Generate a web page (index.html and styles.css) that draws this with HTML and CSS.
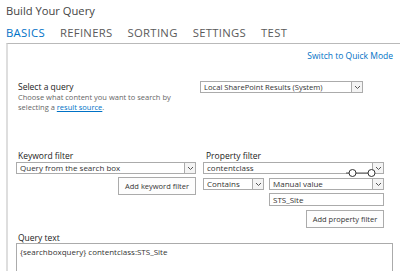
FILE: index.html
```html
<!DOCTYPE html>
<html>
<head>
<meta charset="utf-8">
<link rel="stylesheet" href="styles.css">
</head>
<body>
<div class="title">Build Your Query</div>
<div class="tabs">
  <span class="tab active">BASICS</span>
  <span class="tab">REFINERS</span>
  <span class="tab">SORTING</span>
  <span class="tab">SETTINGS</span>
  <span class="tab">TEST</span>
</div>
<div class="panel">
  <div class="switch"><a>Switch to Quick Mode</a></div>
  <div class="row-query">
    <div class="qlabel">
      <div class="label">Select a query</div>
      <div class="desc">Choose what content you want to search by</div>
      <div class="desc">selecting a <span class="link">result source</span>.</div>
    </div>
    <div class="select wide">
      <span class="val">Local SharePoint Results (System)</span>
      <span class="arrow"><svg width="7" height="5" viewBox="0 0 7 5"><path d="M1 1 L3.5 3.5 L6 1" fill="none" stroke="#555" stroke-width="1"/></svg></span>
    </div>
  </div>
  <div class="filters">
    <div class="col kw">
      <div class="label">Keyword filter</div>
      <div class="select full">
        <span class="val">Query from the search box</span>
        <span class="arrow"><svg width="7" height="5" viewBox="0 0 7 5"><path d="M1 1 L3.5 3.5 L6 1" fill="none" stroke="#555" stroke-width="1"/></svg></span>
      </div>
      <div class="btnrow kwrow"><div class="btn">Add keyword filter</div></div>
    </div>
    <div class="col pf">
      <div class="label">Property filter</div>
      <div class="select full">
        <span class="val">contentclass</span>
        <span class="arrow"><svg width="7" height="5" viewBox="0 0 7 5"><path d="M1 1 L3.5 3.5 L6 1" fill="none" stroke="#555" stroke-width="1"/></svg></span>
      </div>
      <div class="pfrow">
        <div class="select contains">
          <span class="val">Contains</span>
          <span class="arrow"><svg width="7" height="5" viewBox="0 0 7 5"><path d="M1 1 L3.5 3.5 L6 1" fill="none" stroke="#555" stroke-width="1"/></svg></span>
        </div>
        <div class="rightstack">
          <div class="select full">
            <span class="val">Manual value</span>
            <span class="arrow"><svg width="7" height="5" viewBox="0 0 7 5"><path d="M1 1 L3.5 3.5 L6 1" fill="none" stroke="#555" stroke-width="1"/></svg></span>
          </div>
          <div class="input">STS_Site</div>
          <div class="btnrow pfbtnrow"><div class="btn">Add property filter</div></div>
        </div>
      </div>
      <svg class="slider" width="32" height="10" viewBox="0 0 32 10"><line x1="0" y1="5" x2="26" y2="5" stroke="#555" stroke-width="1"/><circle cx="6.5" cy="5" r="3.5" fill="#fff" stroke="#333" stroke-width="1"/><circle cx="25.5" cy="5" r="3.5" fill="#fff" stroke="#333" stroke-width="1"/></svg>
    </div>
  </div>
  <div class="qt">
    <div class="label">Query text</div>
    <div class="textarea">{searchboxquery} contentclass:STS_Site</div>
  </div>
</div>
</body>
</html>
```
FILE: styles.css
```css
html, body { margin: 0; padding: 0; background: #fff; }
body {
  width: 400px; height: 271px; overflow: hidden;
  font-family: "Open Sans", "DejaVu Sans", sans-serif;
  color: #444;
}
.title { font-size: 11.2px; color: #444; padding: 2px 0 0 6px; height: 20px; line-height: 18px; }
.tabs { display: flex; gap: 15px; padding-left: 6px; height: 21px; align-items: center; font-size: 11.3px; color: #5a5a5a; letter-spacing: 0.3px; }
.tab.active { color: #0072c6; }
.panel {
  margin-left: 6px; border-top: 1px solid #b9b9b9; border-left: 2px solid #dedede;
  padding: 5px 0 0 10px; height: 222px; overflow: hidden;
}
.switch { text-align: right; font-size: 8.5px; color: #0072c6; padding-right: 7px; height: 20px; line-height: 14px; }
.row-query { display: flex; padding-top: 10px; height: 33px; }
.qlabel { width: 182px; padding-top: 2px; }
.label { font-size: 8.5px; color: #222; line-height: 11px; height: 11px; }
.desc { font-size: 7.5px; color: #666; line-height: 10px; height: 10px; white-space: nowrap; }
.link { color: #0072c6; text-decoration: underline; }
.select {
  display: flex; align-items: center; border: 1px solid #ababab; height: 10px;
  background: #fff; font-size: 8px; color: #333;
}
.select .val { flex: 1; padding-left: 3px; white-space: nowrap; overflow: hidden; line-height: 10px; }
.select .arrow { width: 10px; height: 10px; border-left: 1px solid #ababab; background: #f4f4f4; display: flex; align-items: center; justify-content: center; }
.wide { width: 161px; margin-top: 2px; font-size: 7.6px; }
.filters { display: flex; margin-top: 38px; margin-left: -2px; }
.col { position: relative; }
.col > .select { margin-top: 1px; }
.kw { width: 180px; }
.kw .label { padding-left: 2px; }
.pf { width: 181px; margin-left: 7px; }
.pf .label { padding-left: 3px; }
.btnrow { display: flex; justify-content: flex-end; }
.kwrow { margin-top: 3px; }
.btn { border: 1px solid #ababab; font-size: 7.5px; color: #333; height: 16px; line-height: 16px; width: 76px; text-align: center; background: #fdfdfd; }
.pfrow { display: flex; margin-top: 4px; gap: 5px; }
.contains { width: 59px; }
.rightstack { flex: 1; display: flex; flex-direction: column; }
.input { border: 1px solid #ababab; height: 11px; line-height: 11px; font-size: 8px; color: #333; padding-left: 3px; margin-top: 3px; }
.pfbtnrow { margin-top: 4px; }
.slider { position: absolute; left: 143px; top: 18px; }
.qt { margin-top: 4px; margin-left: -2px; }
.qt .label { padding-left: 2px; }
.textarea { border: 1px solid #ababab; height: 40px; width: 369px; font-size: 8px; color: #333; padding: 3px 3px; line-height: 10px; }
```
